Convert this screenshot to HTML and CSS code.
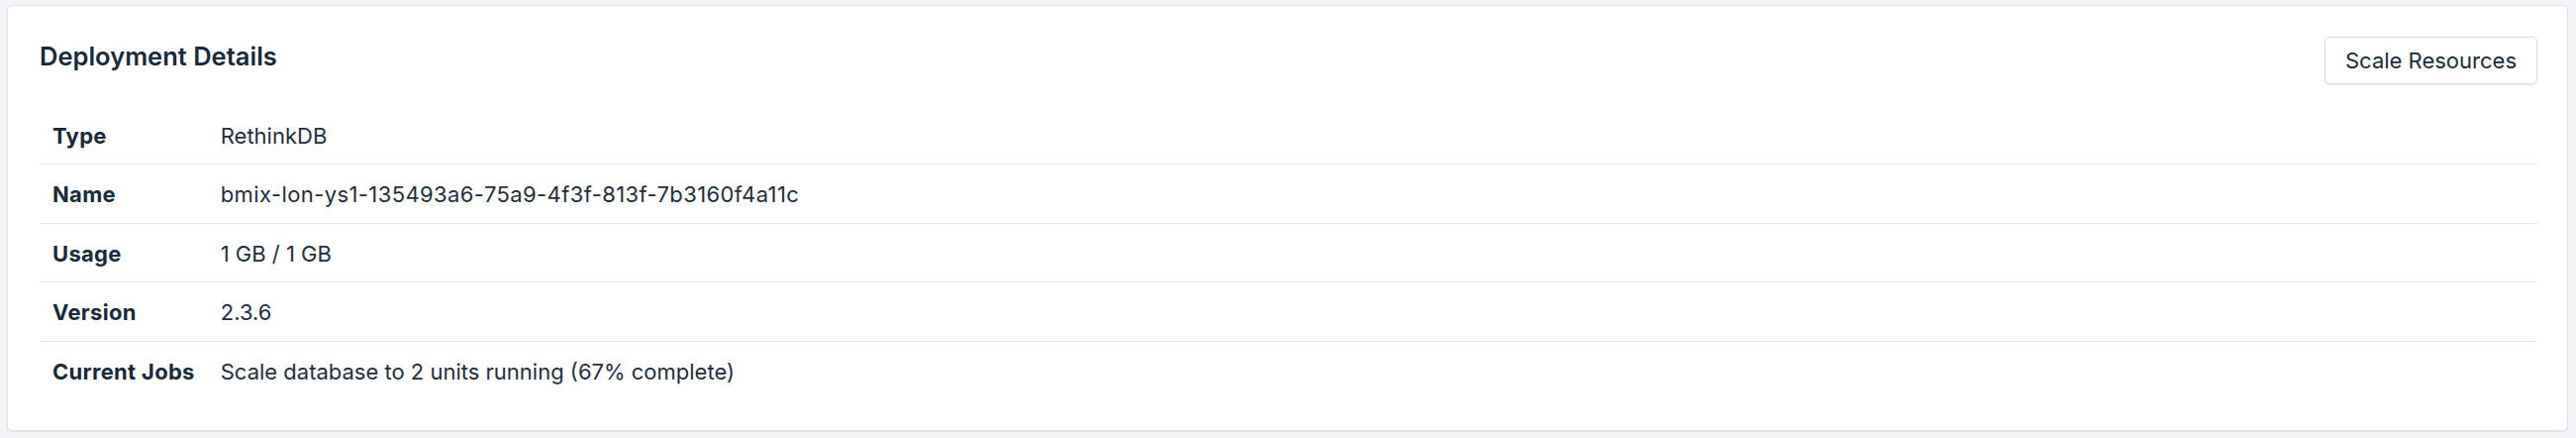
FILE: index.html
```html
<!DOCTYPE html>
<html lang="en">
<head>
<meta charset="utf-8">
<title>Deployment Details</title>
<link rel="stylesheet" href="styles.css">
</head>
<body>
<main class="page">
  <section class="card">
    <header class="card-header">
      <h2 class="card-title">Deployment Details</h2>
      <button class="btn" type="button">Scale Resources</button>
    </header>
    <table class="details">
      <tbody>
        <tr><th>Type</th><td>RethinkDB</td></tr>
        <tr><th>Name</th><td class="id-value">bmix-lon-ys1-135493a6-75a9-4f3f-813f-7b3160f4a11c</td></tr>
        <tr><th>Usage</th><td>1 GB / 1 GB</td></tr>
        <tr><th>Version</th><td>2.3.6</td></tr>
        <tr><th>Current Jobs</th><td>Scale database to 2 units running (67% complete)</td></tr>
      </tbody>
    </table>
  </section>
</main>
</body>
</html>
```
FILE: styles.css
```css
* { box-sizing: border-box; }
html, body {
  margin: 0;
  padding: 0;
  background: #f4f5f9;
}
body {
  font-family: Inter, "Noto Sans", "Liberation Sans", sans-serif;
  color: #1a2b3a;
}
.page {
  padding: 5px 8px 7px 7px;
}
.card {
  background: #fff;
  border: 1px solid #e1e3ea;
  border-radius: 5px;
  box-shadow: 0 1px 1px rgba(30, 40, 70, 0.08);
  padding: 31px 30px 30px 32px;
  height: 430px;
}
.card-header {
  display: flex;
  justify-content: space-between;
  align-items: flex-start;
}
.card-title {
  margin: 0;
  padding-top: 2px;
  font-size: 25.5px;
  line-height: 36px;
  font-weight: 600;
  color: #182a3a;
}
.btn {
  height: 48px;
  padding: 0 20px;
  font-family: inherit;
  font-size: 22px;
  font-weight: 400;
  color: #1a2b3a;
  background: #fff;
  border: 1px solid #d9dce2;
  border-radius: 5px;
  box-shadow: 0 1px 2px rgba(30, 40, 70, 0.1);
}
.details {
  width: 100%;
  margin-top: 22px;
  border-collapse: collapse;
  font-size: 22px;
  line-height: 30px;
}
.details th,
.details td {
  text-align: left;
  padding: 15px 13px 13.4px;
  white-space: nowrap;
}
.details th {
  width: 1%;
  font-weight: 700;
  letter-spacing: 0.3px;
  color: #172a39;
}
.details td {
  font-weight: 400;
  color: #1f2e3c;
}
.details .id-value {
  letter-spacing: 0.4px;
}
.details tr + tr th,
.details tr + tr td {
  border-top: 1px solid #e3e5e9;
}
```
